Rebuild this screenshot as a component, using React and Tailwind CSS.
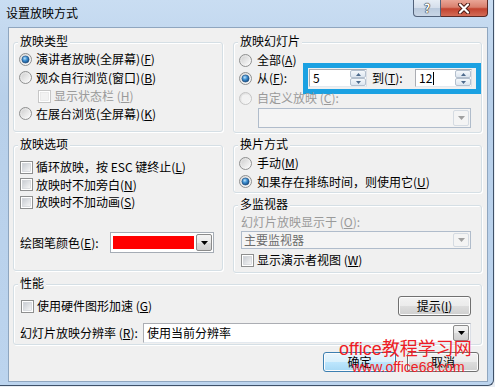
import React from 'react';

const Key = ({ k }) => (
  <>
    (<span className="underline underline-offset-[1px]">{k}</span>)
  </>
);

const Radio = ({ checked, disabled }) => (
  <svg width="13" height="13" viewBox="0 0 13 13" className="shrink-0">
    <circle cx="6.5" cy="6.5" r="6" fill="url(#radioBg)" stroke={disabled ? '#c4c4c4' : '#8e8f8f'} />
    {checked ? (
      <circle cx="6.5" cy="6.5" r="3.6" fill="url(#radioDot)" stroke="#1c4c7c" strokeWidth="0.6" />
    ) : (
      <circle cx="6.5" cy="6.5" r="4" fill={disabled ? '#f2f2f2' : 'url(#radioIn)'} />
    )}
  </svg>
);

const Check = ({ disabled }) => (
  <svg width="13" height="13" viewBox="0 0 13 13" className="shrink-0">
    <rect x="0.5" y="0.5" width="12" height="12" fill="#fff" stroke={disabled ? '#c6c6c6' : '#8e8f8f'} />
    <rect x="2.5" y="2.5" width="8" height="8" fill={disabled ? '#f2f2f2' : 'url(#checkIn)'} stroke={disabled ? '#e2e2e2' : '#c9ccd1'} strokeWidth="0.6" />
  </svg>
);

const Arrow = ({ color = '#000' }) => (
  <svg width="7" height="4" viewBox="0 0 7 4">
    <polygon points="0,0 7,0 3.5,4" fill={color} />
  </svg>
);

const DropBtn = ({ disabled }) => (
  <div
    className={`w-[16px] h-full flex items-center justify-center rounded-[2px] border ${
      disabled
        ? 'border-[#d5dbe2] bg-[#f4f4f4]'
        : 'border-[#8b8b8b] bg-[linear-gradient(180deg,#f4f4f4_0%,#e9e9e9_50%,#dcdcdc_50%,#cfcfcf_100%)]'
    }`}
  >
    <Arrow color={disabled ? '#a0a0a0' : '#000'} />
  </div>
);

const SpinBtn = ({ up }) => (
  <div className="h-[8px] w-[16px] rounded-[2px] border border-[#b4c0ce] bg-[linear-gradient(180deg,#f5f8fb,#dce5ef)] flex items-center justify-center">
    <svg width="5" height="3" viewBox="0 0 5 3">
      <polygon points={up ? '0,3 5,3 2.5,0' : '0,0 5,0 2.5,3'} fill="#4d6a8c" />
    </svg>
  </div>
);

const SpinInput = ({ value, caret, className }) => (
  <div className={`h-[18px] flex items-center border border-[#abadb3] border-b-[#e3e9ef] border-r-[#dbdfe6] bg-white ${className}`}>
    <span className="pl-[3px] flex-1 flex items-center">
      {value}
      {caret && <span className="w-[1px] h-[13px] bg-black ml-[1px]" />}
    </span>
    <div className="flex flex-col gap-[0px] mr-[0px]">
      <SpinBtn up />
      <SpinBtn />
    </div>
  </div>
);

const GroupBox = ({ title, className, children }) => (
  <div className={`relative rounded-[3px] border border-[#d5dfe5] shadow-[inset_1px_1px_0_#ffffff,1px_1px_0_#ffffff] ${className}`}>
    <span className="absolute -top-[9px] left-[4px] px-[2px] bg-[#f0f0f0] leading-[14px] whitespace-nowrap">{title}</span>
    {children}
  </div>
);

const WinButton = ({ children, primary, className }) => (
  <div
    className={`h-[20px] flex items-center justify-center rounded-[3px] border ${
      primary
        ? 'border-[#3c7fb1] bg-[linear-gradient(180deg,#eaf6fd_0%,#d9f0fc_50%,#bee6fd_50%,#a7d9f5_100%)]'
        : 'border-[#707070] bg-[linear-gradient(180deg,#f2f2f2_0%,#ebebeb_50%,#dddddd_50%,#cfcfcf_100%)]'
    } shadow-[inset_0_0_0_1px_#fcfcfc] ${className}`}
  >
    {children}
  </div>
);

export default function App() {
  return (
    <div className="w-[495px] h-[387px] bg-[#e9eef4] overflow-hidden relative font-['Noto_Sans_CJK_SC',sans-serif] text-[12px] leading-[14px] text-black">
      <svg width="0" height="0" className="absolute">
        <defs>
          <linearGradient id="radioBg" x1="0" y1="0" x2="1" y2="1">
            <stop offset="0" stopColor="#d8d8d8" />
            <stop offset="1" stopColor="#ffffff" />
          </linearGradient>
          <linearGradient id="radioIn" x1="0" y1="0" x2="1" y2="1">
            <stop offset="0" stopColor="#d2d2d2" />
            <stop offset="1" stopColor="#f8f8f8" />
          </linearGradient>
          <radialGradient id="radioDot" cx="0.4" cy="0.35" r="0.7">
            <stop offset="0" stopColor="#bfe3fa" />
            <stop offset="0.45" stopColor="#3d8fd1" />
            <stop offset="1" stopColor="#14457a" />
          </radialGradient>
          <linearGradient id="checkIn" x1="0" y1="0" x2="1" y2="1">
            <stop offset="0" stopColor="#c7cbd1" />
            <stop offset="1" stopColor="#f7f7f7" />
          </linearGradient>
        </defs>
      </svg>

      <div className="w-[494px] h-[386px] border-r border-b border-[#3f5168] rounded-br-[6px] bg-[linear-gradient(180deg,#c9ddf2_0%,#b8d0ea_25%,#bcd4ee_100%)] flex flex-col">
        {/* title bar */}
        <div className="h-[27px] flex items-start shrink-0">
          <span className="ml-[6px] mt-[6px]">设置放映方式</span>
          <div className="ml-auto mr-[5px] flex">
            <div className="w-[28px] h-[17px] border border-t-0 border-[#52627a] rounded-bl-[4px] bg-[linear-gradient(180deg,#e6edf5_0%,#d4deeb_50%,#b9c9dc_50%,#c9d6e6_100%)] flex items-center justify-center text-white font-bold text-[12px] [text-shadow:0_0_1px_#222,0_0_1px_#222,0_0_1px_#222]">
              ?
            </div>
            <div className="w-[47px] h-[17px] border border-t-0 border-l-0 border-[#5b2a25] rounded-br-[4px] bg-[linear-gradient(180deg,#e9a596_0%,#d9806e_45%,#c2432f_55%,#d36c57_100%)] flex items-center justify-center">
              <svg width="14" height="11" viewBox="0 0 14 11">
                <path d="M3 1.5 L11 9.5 M11 1.5 L3 9.5" stroke="#4a1a14" strokeWidth="4" strokeLinecap="round" />
                <path d="M3 1.5 L11 9.5 M11 1.5 L3 9.5" stroke="#ffffff" strokeWidth="2.2" strokeLinecap="round" />
              </svg>
            </div>
          </div>
        </div>

        {/* client area */}
        <div className="ml-[8px] w-[480px] h-[355px] border border-[#8fa6bf] bg-[#f0f0f0] px-[4px]">
          <div className="grid grid-cols-[210px_249px] gap-x-[10px] items-start">
            {/* left column */}
            <div className="flex flex-col">
              <GroupBox title="放映类型" className="mt-[14px] h-[90px]">
                <div className="pt-[7px] pl-[5px] flex flex-col">
                  <div className="h-[18px] flex items-center gap-[4px]">
                    <Radio checked />
                    <span>演讲者放映(全屏幕)<Key k="F" /></span>
                  </div>
                  <div className="h-[19px] flex items-center gap-[4px]">
                    <Radio />
                    <span>观众自行浏览(窗口)<Key k="B" /></span>
                  </div>
                  <div className="h-[18px] flex items-center gap-[3px] pl-[19px]">
                    <Check disabled />
                    <span className="text-[#9a9a9a]">显示状态栏 <Key k="H" /></span>
                  </div>
                  <div className="h-[17px] flex items-center gap-[4px]">
                    <Radio />
                    <span>在展台浏览(全屏幕)<Key k="K" /></span>
                  </div>
                </div>
              </GroupBox>

              <GroupBox title="放映选项" className="mt-[13px] h-[126px]">
                <div className="pt-[12px] pl-[6px] flex flex-col">
                  <div className="h-[18px] flex items-center gap-[3px]">
                    <Check />
                    <span>循环放映，按 ESC 键终止<Key k="L" /></span>
                  </div>
                  <div className="h-[17px] flex items-center gap-[3px]">
                    <Check />
                    <span>放映时不加旁白<Key k="N" /></span>
                  </div>
                  <div className="h-[18px] flex items-center gap-[3px]">
                    <Check />
                    <span>放映时不加动画<Key k="S" /></span>
                  </div>
                  <div className="mt-[21px] h-[21px] flex items-center">
                    <span className="w-[90px]">绘图笔颜色<Key k="E" />:</span>
                    <div className="w-[104px] h-[21px] border border-[#a5acb5] bg-white flex items-center pl-[2px] pr-[1px] gap-[2px]">
                      <div className="w-[81px] h-[13px] bg-[#ff0000]" />
                      <div className="h-[17px] ml-auto">
                        <DropBtn />
                      </div>
                    </div>
                  </div>
                </div>
              </GroupBox>
            </div>

            {/* right column */}
            <div className="flex flex-col">
              <GroupBox title="放映幻灯片" className="mt-[14px] h-[91px]">
                <div className="pt-[8px] pl-[5px] flex flex-col">
                  <div className="h-[18px] flex items-center gap-[5px]">
                    <Radio />
                    <span>全部<Key k="A" /></span>
                  </div>
                  <div className="h-[18px] flex items-center gap-[5px]">
                    <Radio checked />
                    <span className="w-[43px]">从<Key k="F" />:</span>
                    <div className="h-[31px] w-[178px] border-[5px] border-[#1ba1e2] flex items-center pl-[1px] shrink-0">
                      <SpinInput value="5" className="w-[58px]" />
                      <span className="ml-[5px] w-[43px]">到<Key k="T" />:</span>
                      <SpinInput value="12" caret className="w-[57px]" />
                    </div>
                  </div>
                  <div className="mt-[2px] h-[18px] flex items-center gap-[5px]">
                    <Radio disabled />
                    <span className="text-[#9a9a9a]">自定义放映 <Key k="C" />:</span>
                  </div>
                  <div className="mt-[1px] ml-[19px] w-[213px] h-[20px] border border-[#b0bccb] bg-[#f4f4f4] flex justify-end p-[1px]">
                    <DropBtn disabled />
                  </div>
                </div>
              </GroupBox>

              <GroupBox title="换片方式" className="mt-[12px] h-[48px]">
                <div className="pt-[8px] pl-[5px] flex flex-col">
                  <div className="h-[18px] flex items-center gap-[5px]">
                    <Radio />
                    <span>手动<Key k="M" /></span>
                  </div>
                  <div className="h-[19px] flex items-center gap-[5px]">
                    <Radio checked />
                    <span>如果存在排练时间，则使用它<Key k="U" /></span>
                  </div>
                </div>
              </GroupBox>

              <GroupBox title="多监视器" className="mt-[12px] h-[68px]">
                <div className="pt-[8px] pl-[7px] flex flex-col">
                  <div className="h-[16px] flex items-center text-[#9a9a9a]">
                    幻灯片放映显示于 <Key k="O" />:
                  </div>
                  <div className="mt-[1px] w-[230px] h-[18px] border border-[#b0bccb] bg-[#f4f4f4] flex items-center p-[1px]">
                    <span className="pl-[1px] text-[#6d6d6d] flex-1">主要监视器</span>
                    <div className="h-full">
                      <DropBtn disabled />
                    </div>
                  </div>
                  <div className="mt-[2px] h-[18px] flex items-center gap-[3px]">
                    <Check />
                    <span>显示演示者视图 <Key k="W" /></span>
                  </div>
                </div>
              </GroupBox>
            </div>
          </div>

          <GroupBox title="性能" className="mt-[11px] h-[61px] w-[469px]">
            <div className="pt-[12px] flex flex-col">
              <div className="h-[18px] flex items-center pl-[7px]">
                <Check />
                <span className="ml-[3px]">使用硬件图形加速 <Key k="G" /></span>
                <WinButton className="ml-auto mr-[10px] w-[73px] h-[18px]">
                  提示<Key k="I" />
                </WinButton>
              </div>
              <div className="mt-[8px] h-[20px] flex items-center pl-[6px]">
                <span className="w-[123px]">幻灯片放映分辨率 <Key k="R" />:</span>
                <div className="w-[328px] h-[20px] border border-[#abadb3] border-b-[#e3e9ef] border-r-[#dbdfe6] bg-white flex items-center p-[1px]">
                  <span className="pl-[2px] flex-1">使用当前分辨率</span>
                  <div className="h-full">
                    <DropBtn />
                  </div>
                </div>
              </div>
            </div>
          </GroupBox>

          <div className="mt-[7px] flex justify-end pr-[4px] gap-[11px]">
            <WinButton primary className="w-[73px]">确定</WinButton>
            <WinButton className="w-[72px]">取消</WinButton>
          </div>
        </div>
      </div>

      {/* watermark */}
      <div className="absolute left-[339px] top-[339px] pointer-events-none font-['Liberation_Sans','Noto_Sans_CJK_SC',sans-serif] text-[#ee1c25]">
        <div className="text-[18px] leading-[20px]">office教程学习网</div>
        <div className="text-[14px] leading-[16px] ml-[13px]">www.office68.com</div>
      </div>
    </div>
  );
}
